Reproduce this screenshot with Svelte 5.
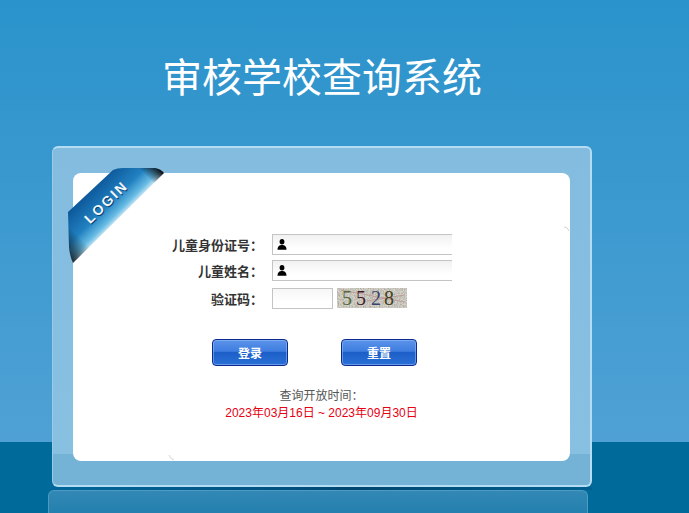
<script>
    const fields = [
        { label: '儿童身份证号：', icon: true },
        { label: '儿童姓名：', icon: true }
    ];
    const digits = [
        { ch: '5', x: 5, color: '#56683c' },
        { ch: '5', x: 19, color: '#431c2a' },
        { ch: '2', x: 34, color: '#37436a' },
        { ch: '8', x: 47, color: '#443f20' }
    ];
</script>

<div class="page">
    <h1 class="title">审核学校查询系统</h1>

    <div class="panel">
        <div class="card">
            <svg class="ribbon" width="100" height="100" viewBox="0 0 100 100" aria-hidden="true">
                <defs>
                    <linearGradient id="band" gradientUnits="userSpaceOnUse" x1="24" y1="24" x2="52" y2="52">
                        <stop offset="0" stop-color="#0e5a9c" />
                        <stop offset="0.55" stop-color="#2180c0" />
                        <stop offset="0.85" stop-color="#66bbe4" />
                        <stop offset="1" stop-color="#cfe8f4" />
                    </linearGradient>
                    <linearGradient id="ends" gradientUnits="userSpaceOnUse" x1="0" y1="96" x2="97" y2="0">
                        <stop offset="0" stop-color="#05070c" />
                        <stop offset="0.2" stop-color="#05070c" stop-opacity="0" />
                        <stop offset="0.86" stop-color="#05070c" stop-opacity="0" />
                        <stop offset="0.97" stop-color="#05070c" />
                    </linearGradient>
                </defs>
                <path d="M1 45 L46 3 Q50 1 56 1 L88 1 Q94 2 97 6 L6 96 Q3 90 2 80 Z" fill="url(#band)" />
                <path d="M1 45 L46 3 Q50 1 56 1 L88 1 Q94 2 97 6 L6 96 Q3 90 2 80 Z" fill="url(#ends)" />
                <text class="ribbon-shadow" text-anchor="middle" transform="translate(40 36) rotate(-44)" y="5">LOGIN</text>
                <text class="ribbon-text" text-anchor="middle" transform="translate(39 35) rotate(-44)" y="5">LOGIN</text>
            </svg>

            <form class="form">
                {#each fields as f}
                    <div class="row">
                        <label class="label" for={f.label}>{f.label}</label>
                        <div class="field">
                            <svg class="user" width="10" height="11" viewBox="0 0 10 11" aria-hidden="true">
                                <ellipse cx="5" cy="2.8" rx="2.4" ry="2.7" />
                                <path d="M0.5 10.8 C0.5 7.4 2.6 6 5 6 C7.4 6 9.5 7.4 9.5 10.8 Z" />
                            </svg>
                            <input id={f.label} class="input" type="text" />
                        </div>
                    </div>
                {/each}

                <div class="row code-row">
                    <label class="label" for="code">验证码：</label>
                    <input id="code" class="code" type="text" />
                    <svg class="captcha" width="70" height="20" viewBox="0 0 70 20" aria-label="5528">
                        <filter id="noise" x="0" y="0" width="100%" height="100%">
                            <feTurbulence type="fractalNoise" baseFrequency="0.8" numOctaves="2" seed="4" />
                            <feColorMatrix values="0 0 0 0 0.42  0 0 0 0 0.41  0 0 0 0 0.36  0 0 0 2.4 -0.85" />
                        </filter>
                        <rect width="70" height="20" fill="#d6d4cb" />
                        <rect width="70" height="20" filter="url(#noise)" />
                        <path d="M4 2 L68 14 M30 13 L68 7" stroke="#bb9292" stroke-width="0.8" fill="none" />
                        {#each digits as d}
                            <text class="digit" x={d.x} y="17" fill={d.color}>{d.ch}</text>
                        {/each}
                    </svg>
                </div>

                <div class="buttons">
                    <button class="btn" type="button">登录</button>
                    <button class="btn" type="button">重置</button>
                </div>

                <p class="time-label">查询开放时间：</p>
                <p class="time">2023年03月16日 ~ 2023年09月30日</p>
            </form>

            <svg class="curl curl-top" width="6" height="6" viewBox="0 0 6 6" aria-hidden="true">
                <path d="M0 1 Q4 1 5 5" />
            </svg>
            <svg class="curl curl-bottom" width="6" height="6" viewBox="0 0 6 6" aria-hidden="true">
                <path d="M1 0 Q2 4 6 5" />
            </svg>
        </div>
    </div>

    <div class="shadow"></div>
    <div class="reflection"></div>
</div>

<style>
    :global(body) {
        margin: 0;
        overflow: hidden;
    }

    .page {
        width: 689px;
        height: 513px;
        overflow: hidden;
        background: linear-gradient(to bottom, #2a93cb 0, #4fa1d4 442px, #006a9b 442px, #006a9b 513px);
        font-family: "Noto Sans CJK SC", "Liberation Sans", sans-serif;
    }

    .title {
        margin: 0;
        padding: 46px 0 0 162px;
        height: 146px;
        box-sizing: border-box;
        font-size: 40px;
        line-height: 58px;
        font-weight: 400;
        color: #fff;
    }

    .panel {
        width: 540px;
        height: 341px;
        margin-left: 52px;
        padding: 25px 20px 26px 20px;
        box-sizing: border-box;
        border: 1px solid #b4dcf2;
        border-left-color: #9ccbe8;
        border-width: 2px 2px 2px 1px;
        border-radius: 6px;
        background: linear-gradient(to bottom, #84bce0 0, #88c0e2 306px, #74b3d5 306px);
    }

    .card {
        position: relative;
        height: 288px;
        background: #fff;
        border-radius: 8px;
    }

    .ribbon {
        position: absolute;
        left: -6px;
        top: -6px;
    }

    .ribbon-text,
    .ribbon-shadow {
        font-family: "Liberation Sans", sans-serif;
        font-size: 14px;
        font-weight: 700;
        letter-spacing: 2px;
    }

    .ribbon-text {
        fill: #f4f9fc;
    }

    .ribbon-shadow {
        fill: #0b3f70;
    }

    .form {
        display: flex;
        flex-direction: column;
        padding-top: 61px;
    }

    .row {
        display: flex;
        align-items: center;
        height: 21px;
        margin-bottom: 5px;
    }

    .code-row {
        margin-top: 2px;
        margin-bottom: 0;
    }

    .label {
        width: 190px;
        margin-right: 9px;
        text-align: right;
        font-size: 13px;
        font-weight: 700;
        color: #333;
        white-space: nowrap;
    }

    .field {
        position: relative;
        width: 180px;
        height: 21px;
    }

    .user {
        position: absolute;
        left: 5px;
        top: 5px;
        fill: #000;
    }

    .input {
        display: block;
        width: 100%;
        height: 100%;
        padding: 0;
        box-sizing: border-box;
        border: 1px solid #c4c4c4;
        border-right: 0;
        background: linear-gradient(to bottom, #f1f1f1 0, #fff 70%);
    }

    .code {
        width: 61px;
        height: 21px;
        padding: 0;
        box-sizing: border-box;
        border: 1px solid #c4c4c4;
        background: linear-gradient(to bottom, #f6f6f6 0, #fff 70%);
    }

    .captcha {
        margin-left: 4px;
        margin-top: -1px;
    }

    .digit {
        font-family: "Liberation Serif", serif;
        font-size: 20px;
    }

    .buttons {
        display: flex;
        gap: 53px;
        padding: 30px 0 0 139px;
    }

    .btn {
        width: 76px;
        height: 27px;
        padding: 0;
        border: 1px solid #0d2a8f;
        border-radius: 4px;
        background: linear-gradient(to bottom, #5b93ea 0, #3f7ddf 45%, #1c5fc8 50%, #2a70d6 100%);
        box-shadow: inset 0 0 0 1px rgba(150, 190, 245, 0.55);
        color: #fff;
        font-family: inherit;
        font-size: 12px;
        font-weight: 700;
    }

    .time-label,
    .time {
        margin: 0;
        text-align: center;
        font-size: 12px;
        line-height: 18px;
        width: 497px;
    }

    .time-label {
        margin-top: 20px;
        color: #555;
    }

    .time {
        color: #e60012;
        font-family: "Liberation Sans", "Noto Sans CJK SC", sans-serif;
    }

    .curl {
        position: absolute;
        fill: none;
        stroke: #d4d4d4;
        stroke-width: 1;
    }

    .curl-top {
        right: 0;
        top: 53px;
    }

    .curl-bottom {
        left: 95px;
        bottom: 0;
    }

    .shadow {
        width: 540px;
        height: 3px;
        margin-left: 52px;
        background: linear-gradient(to right, #00679a 0, #004f7e 45%, #00466f 55%, #005f8f 100%);
    }

    .reflection {
        width: 540px;
        height: 30px;
        margin-left: 48px;
        box-sizing: border-box;
        border: 1px solid #4d9bc2;
        border-bottom: 0;
        border-radius: 6px 6px 0 0;
        background: linear-gradient(to bottom, #3388b5 0, #1e7dac 100%);
    }
</style>
